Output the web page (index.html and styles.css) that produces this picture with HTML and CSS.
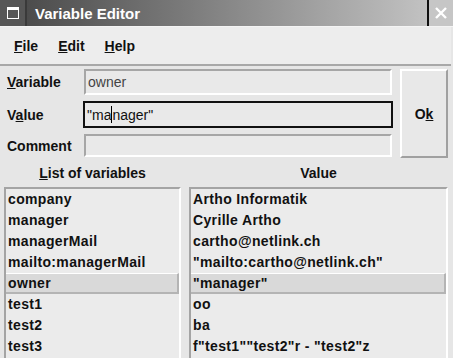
FILE: index.html
```html
<!DOCTYPE html>
<html lang="en">
<head>
    <meta charset="UTF-8">
    <title>Variable Editor</title>
    <link rel="stylesheet" href="styles.css">
</head>
<body>
    <div class="window">
        <!-- Title bar -->
        <div class="titlebar">
            <div class="tb-icon">
                <svg width="12" height="12" viewBox="0 0 12 12">
                    <rect x="0.5" y="0.5" width="11" height="11" fill="none" stroke="#fff" stroke-width="1"/>
                    <rect x="0" y="0" width="12" height="3" fill="#fff"/>
                </svg>
            </div>
            <div class="tb-title">Variable Editor</div>
            <div class="tb-close">
                <svg width="12" height="12" viewBox="0 0 12 12">
                    <path d="M1 1 L11 11 M11 1 L1 11" stroke="#fff" stroke-width="2.4"/>
                </svg>
            </div>
        </div>

        <!-- Menu bar -->
        <div class="menubar">
            <span class="menu"><u>F</u>ile</span>
            <span class="menu"><u>E</u>dit</span>
            <span class="menu"><u>H</u>elp</span>
        </div>

        <!-- Entry fields -->
        <div class="editor">
            <div class="fields">
                <div class="label"><u>V</u>ariable</div>
                <div class="field">owner</div>
                <div class="label">V<u>a</u>lue</div>
                <div class="field focused">"ma<span class="caret"></span>nager"</div>
                <div class="label">Comment</div>
                <div class="field short"></div>
            </div>
            <div class="ok">O<u>k</u></div>
        </div>

        <!-- Variable lists -->
        <div class="lists">
            <div class="col col-name">
                <div class="col-head"><u>L</u>ist of variables</div>
                <div class="list">
                    <div class="row">company</div>
                    <div class="row">manager</div>
                    <div class="row">managerMail</div>
                    <div class="row">mailto:managerMail</div>
                    <div class="row selected">owner</div>
                    <div class="row">test1</div>
                    <div class="row">test2</div>
                    <div class="row">test3</div>
                </div>
            </div>
            <div class="col col-value">
                <div class="col-head">Value</div>
                <div class="list">
                    <div class="row">Artho Informatik</div>
                    <div class="row">Cyrille Artho</div>
                    <div class="row">cartho@netlink.ch</div>
                    <div class="row">"mailto:cartho@netlink.ch"</div>
                    <div class="row selected">"manager"</div>
                    <div class="row">oo</div>
                    <div class="row">ba</div>
                    <div class="row">f"test1""test2"r - "test2"z</div>
                </div>
            </div>
        </div>
    </div>
</body>
</html>
```

FILE: styles.css
```css
 body {
     margin: 0; padding: 0;
     font-family: "Liberation Sans", Arial, sans-serif;
     background-color: #e6e6e6;
     color: #111;
     overflow: hidden;
 }
 .window {
     width: 453px; height: 358px;
     overflow: hidden;
     background-color: #e6e6e6;
 }

 /* Title bar */
 .titlebar {
     display: flex;
     height: 26px;
     border-bottom: 1px solid #f4f4f4;
 }
 .tb-icon {
     width: 25px;
     display: flex;
     align-items: center;
     justify-content: center;
     background: #565656;
     border-right: 2px solid #3a3a3a;
 }
 .tb-title {
     flex: 1;
     display: flex;
     align-items: center;
     padding-left: 8px;
     background: linear-gradient(to right, #4c4c4c, #c2c2c2);
     color: #fff;
     font-weight: bold;
     font-size: 15px;
 }
 .tb-close {
     width: 24px;
     display: flex;
     align-items: center;
     justify-content: center;
     background: #c6c6c6;
     border-left: 2px solid #111;
 }

 /* Menu bar */
 .menubar {
     display: flex;
     align-items: center;
     height: 37px;
     padding-left: 4px;
     background: #ededed;
     border-bottom: 2px solid #a8a8a8;
     margin-right: 2px;
 }
 .menu {
     padding: 0 10px;
     font-size: 14px;
     font-weight: bold;
     color: #111;
 }

 /* Editor area */
 .editor {
     display: flex;
     padding: 3px 5px 0 7px;
 }
 .fields {
     display: grid;
     grid-template-columns: 77px 308px;
     grid-template-rows: 26px 27px 23px;
     row-gap: 6px;
     align-items: center;
 }
 .label {
     font-size: 14px;
     font-weight: bold;
     color: #111;
 }
 .field {
     box-sizing: border-box;
     height: 100%;
     display: flex;
     align-items: center;
     padding-left: 2px;
     font-size: 14px;
     color: #444;
     background: #e9e9e9;
     border: 2px solid;
     border-color: #a6a6a6 #fff #fff #a6a6a6;
 }
 .field.focused {
     border-color: #111;
     color: #111;
     margin-left: -1px;
     margin-right: -1px;
 }
 .caret {
     display: inline-block;
     width: 1px; height: 17px;
     background: #000;
     margin: 0 0 0 0;
 }
 .ok {
     box-sizing: border-box;
     width: 48px; height: 89px;
     margin-left: 8px;
     display: flex;
     align-items: center;
     justify-content: center;
     font-size: 14px;
     font-weight: bold;
     color: #111;
     background: #e8e8e8;
     border: 2px solid;
     border-color: #fff #a0a0a0 #a0a0a0 #fff;
 }

 /* Lists */
 .lists {
     display: flex;
     gap: 8px;
     padding: 1px 5px 0 4px;
 }
 .col-name { width: 177px; }
 .col-value { flex: 1; }
 .col-head {
     height: 28px;
     display: flex;
     align-items: center;
     justify-content: center;
     font-size: 14px;
     font-weight: bold;
     color: #111;
 }
 .list {
     height: 200px;
     background: #ebebeb;
     border: 2px solid;
     border-color: #a4a4a4 #fff #fff #a4a4a4;
 }
 .row {
     height: 21px;
     line-height: 20px;
     padding-left: 2px;
     font-size: 14px;
     font-weight: bold;
     letter-spacing: 0.35px;
     white-space: nowrap;
     color: #111;
 }
 .row.selected {
     box-sizing: border-box;
     background: #d9d9d9;
     border-top: 1px solid #fff;
     border-bottom: 2px solid #b4b4b4;
     border-right: 2px solid #b4b4b4;
     line-height: 18px;
 }
```
